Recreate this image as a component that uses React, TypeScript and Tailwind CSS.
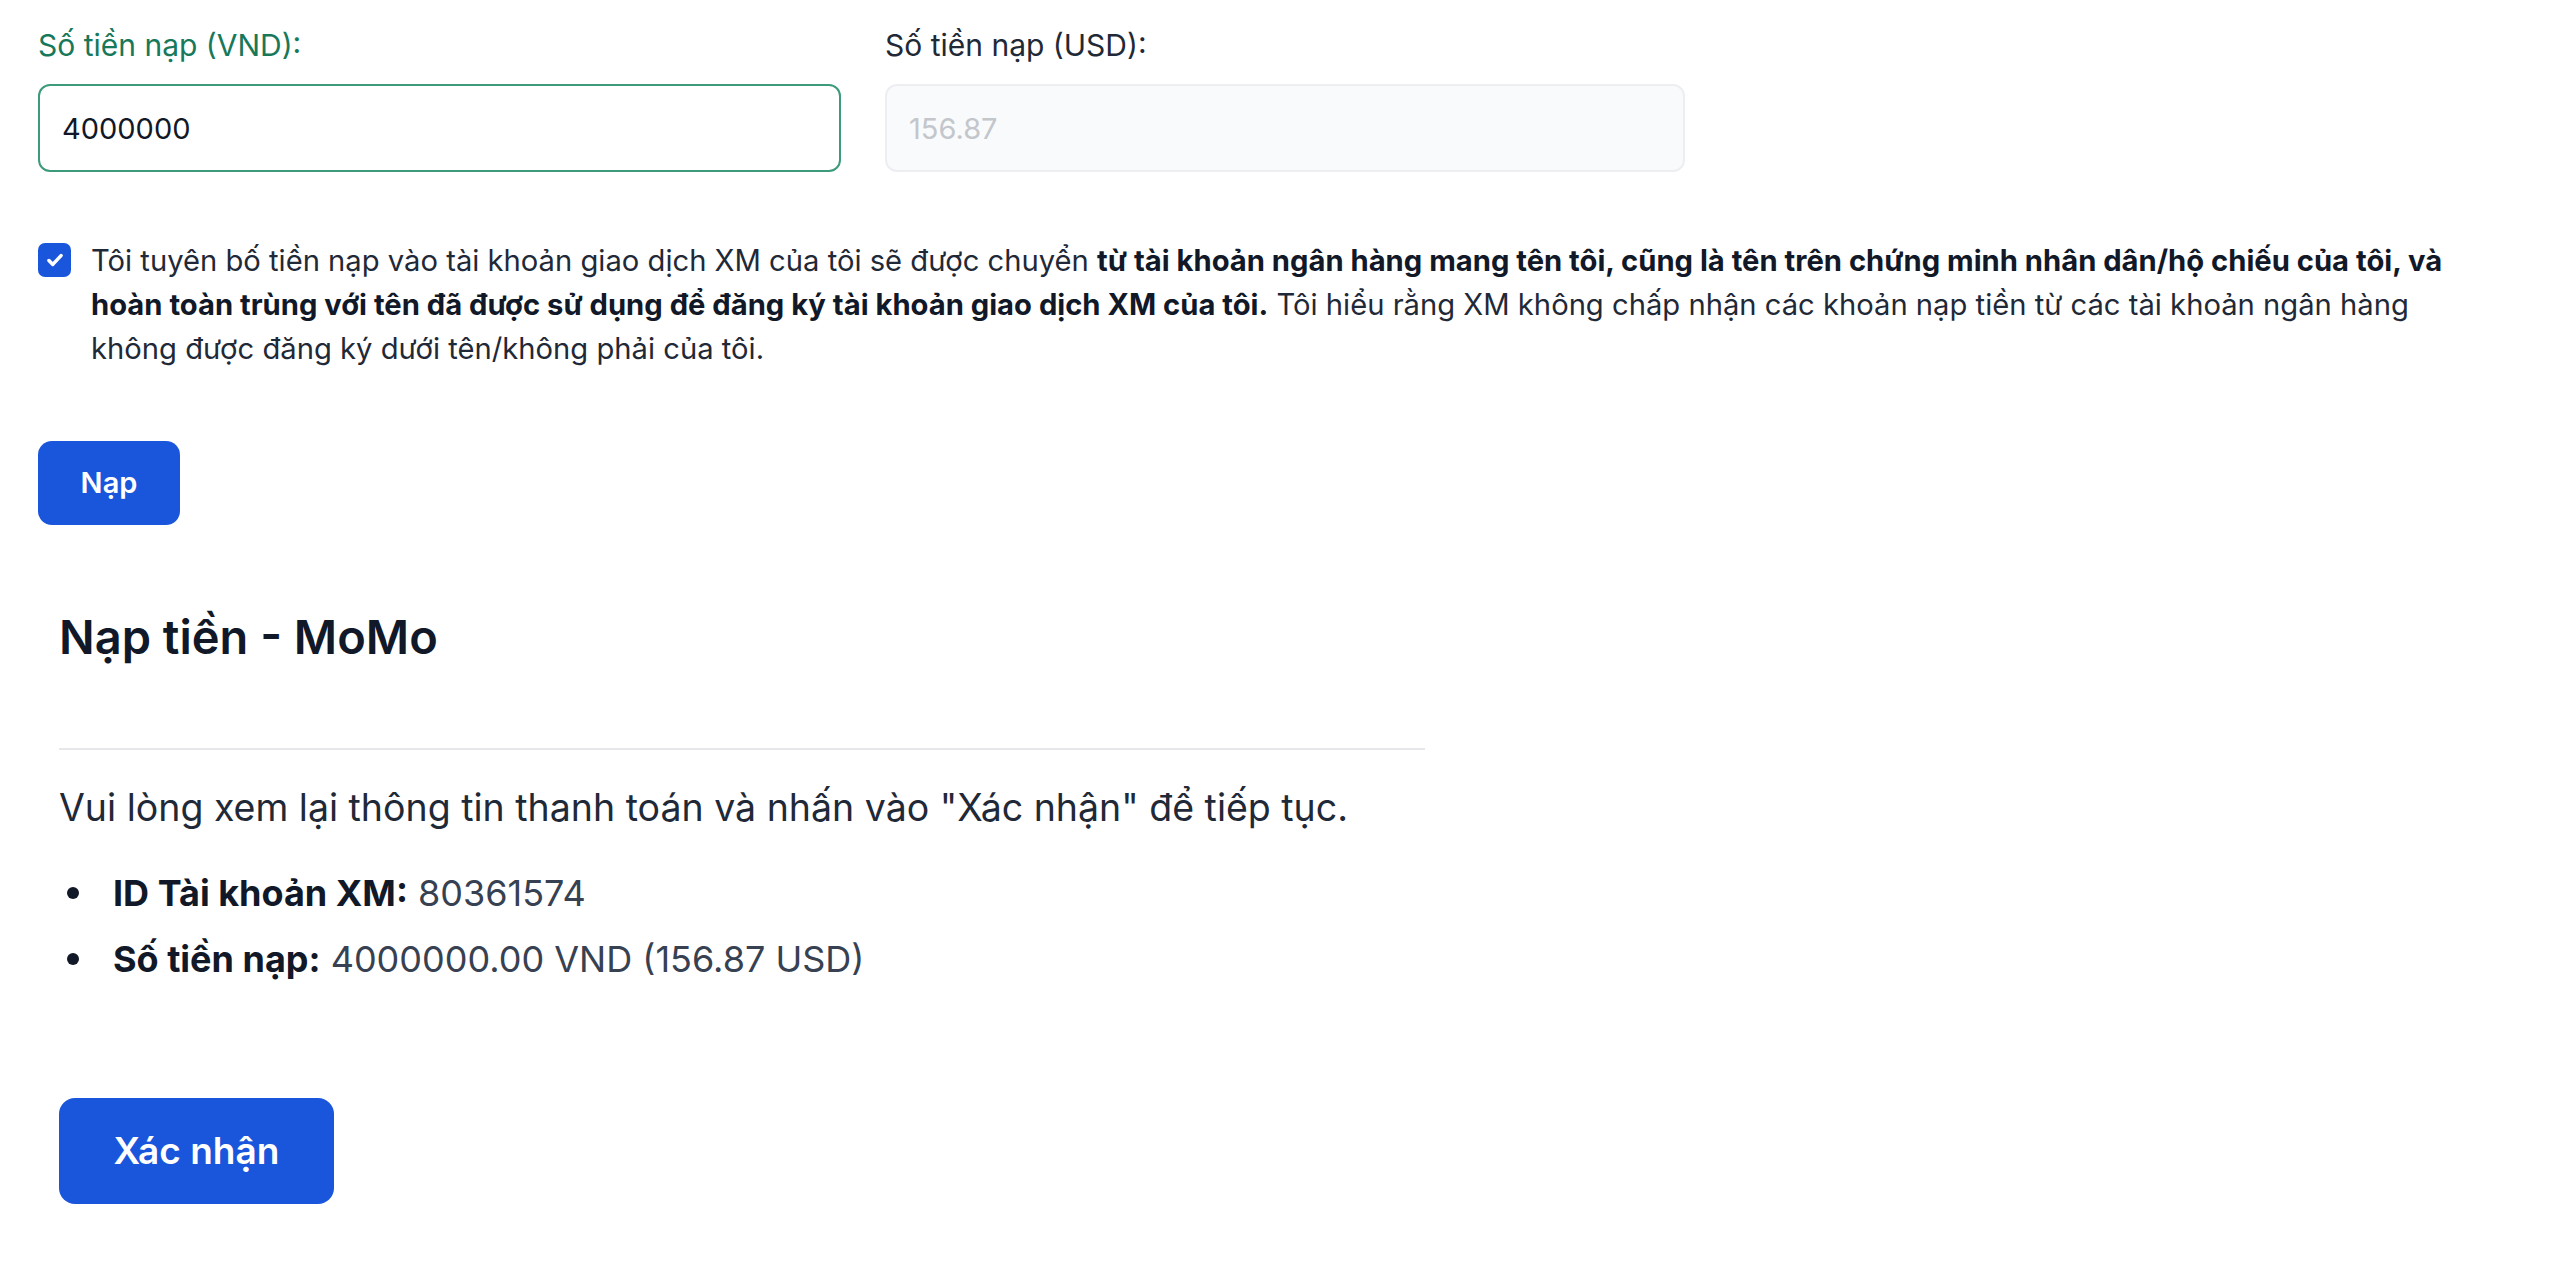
import React from "react";

export default function App() {
  return (
    <div className="min-h-screen bg-white pl-[38px] pr-[20px] font-['Inter','Noto_Sans',sans-serif] text-[#1f2937]">
      <div className="grid grid-cols-[803px_800px] gap-x-[44px] pt-[25px]">
        <div>
          <label className="block text-[30px] leading-[40px] text-[#17785a]">Số tiền nạp (VND):</label>
          <input
            readOnly
            defaultValue="4000000"
            className="mt-[19px] block h-[88px] w-full rounded-[12px] border-2 border-[#3d9a7c] bg-white px-[22px] text-[29px] text-[#111827] outline-none"
          />
        </div>
        <div>
          <label className="block text-[30px] leading-[40px] text-[#1f2937]">Số tiền nạp (USD):</label>
          <input
            readOnly
            defaultValue="156.87"
            className="mt-[19px] block h-[88px] w-full rounded-[12px] border-2 border-[#eceef1] bg-[#f9fafb] px-[22px] text-[29px] text-[#c3c6cb] outline-none"
          />
        </div>
      </div>

      <div className="mt-[67px] flex items-start">
        <div className="mt-[4px] flex h-[34px] w-[33px] shrink-0 items-center justify-center rounded-[7px] bg-[#1a56db]">
          <svg width="22" height="22" viewBox="0 0 20 20" fill="none">
            <path d="M4.5 10.5l3.5 3.5 7.5-8" stroke="white" strokeWidth="3.2" strokeLinecap="round" strokeLinejoin="round" />
          </svg>
        </div>
        <p className="ml-[20px] whitespace-nowrap text-[29.2px] leading-[44px] text-[#1f2937]">
          Tôi tuyên bố tiền nạp vào tài khoản giao dịch XM của tôi sẽ được chuyển{" "}
          <span className="font-bold text-[#111827]">
            từ tài khoản ngân hàng mang tên tôi, cũng là tên trên chứng minh nhân dân/hộ chiếu của tôi, và
            <br />
            hoàn toàn trùng với tên đã được sử dụng để đăng ký tài khoản giao dịch XM của tôi.
          </span>{" "}
          Tôi hiểu rằng XM không chấp nhận các khoản nạp tiền từ các tài khoản ngân hàng
          <br />
          không được đăng ký dưới tên/không phải của tôi.
        </p>
      </div>

      <button className="mt-[70px] flex h-[84px] w-[142px] items-center justify-center rounded-[14px] bg-[#1a56db] text-[29px] font-semibold text-white">
        Nạp
      </button>

      <section className="mt-[83px] w-[1387px] pl-[21px]">
        <h2 className="text-[47px] leading-[58px] font-semibold text-[#111827]">Nạp tiền - MoMo</h2>
        <div className="mt-[82px] h-[2px] w-full bg-[#e5e7eb]" />
        <p className="mt-[32px] text-[37.5px] leading-[52px] text-[#1f2937]">
          Vui lòng xem lại thông tin thanh toán và nhấn vào "Xác nhận" để tiếp tục.
        </p>
        <ul className="mt-[33px] flex flex-col gap-[14px] text-[36px] leading-[52px]">
          <li className="flex items-center pl-[8px]">
            <span className="h-[12px] w-[12px] shrink-0 rounded-full bg-[#111827]" />
            <span className="ml-[34px]">
              <span className="font-bold text-[#111827]">ID Tài khoản XM:</span>{" "}
              <span className="text-[#374151]">80361574</span>
            </span>
          </li>
          <li className="flex items-center pl-[8px]">
            <span className="h-[12px] w-[12px] shrink-0 rounded-full bg-[#111827]" />
            <span className="ml-[34px]">
              <span className="font-bold text-[#111827]">Số tiền nạp:</span>{" "}
              <span className="text-[#374151]">4000000.00 VND (156.87 USD)</span>
            </span>
          </li>
        </ul>
        <button className="mt-[113px] flex h-[106px] w-[275px] items-center justify-center rounded-[16px] bg-[#1a56db] text-[37px] font-semibold text-white">
          Xác nhận
        </button>
      </section>
    </div>
  );
}
